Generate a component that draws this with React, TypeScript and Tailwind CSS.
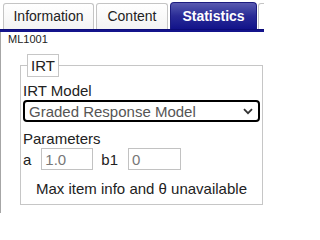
import React from "react";

export default function App() {
  return (
    <div
      className="w-[264px] h-[213px] overflow-hidden bg-white text-[#222]"
      style={{ fontFamily: '"Liberation Sans", Arial, sans-serif' }}
    >
      {/* tab strip */}
      <div className="flex items-end h-[29px] pl-[3px] gap-[2px] text-[14px] overflow-hidden">
        <div className="shrink-0 flex items-center justify-center w-[91px] h-[26px] border border-b-0 border-[#c4c4c4] rounded-t-[3px] bg-gradient-to-b from-white to-[#f3f3f3]">
          Information
        </div>
        <div className="shrink-0 flex items-center justify-center w-[72px] h-[26px] border border-b-0 border-[#c4c4c4] rounded-t-[3px] bg-gradient-to-b from-white to-[#f3f3f3]">
          Content
        </div>
        <div className="shrink-0 flex items-center justify-center w-[87px] h-[27px] border border-b-0 border-[#1c1c80] rounded-t-[4px] bg-gradient-to-b from-[#5a5ab0] via-[#2a2a96] to-[#12128a] text-white font-bold">
          Statistics
        </div>
        <div className="shrink-0 ml-[-1px] w-[40px] h-[26px] border border-b-0 border-[#c4c4c4] rounded-t-[3px] bg-white" />
      </div>
      <div className="h-[3px] w-full bg-[#14148c] border-t border-[#0c0c78]" />

      {/* panel */}
      <div className="border-l border-[#a6a6a6] h-[181px] pl-[7px] pt-[1px]">
        <div className="text-[11px] leading-[13px]">ML1001</div>

        <fieldset className="mt-[8px] ml-[12px] w-[243px] border border-[#c6c6c6] px-[2px] pt-[5px] pb-[7px] text-[15px] leading-[17px]">
          <legend className="ml-[4px] border border-[#c6c6c6] px-[3px] py-[2px]">IRT</legend>

          <div>IRT Model</div>
          <div className="mt-[1px] flex items-center justify-between h-[22px] border-2 border-black rounded-[4px] pl-[4px] pr-[4px] text-[#555]">
            <span>Graded Response Model</span>
            <svg width="10" height="7" viewBox="0 0 10 7" className="mr-[1px]">
              <path d="M1 1.2 L5 5.2 L9 1.2" fill="none" stroke="#333" strokeWidth="1.8" />
            </svg>
          </div>

          <div className="mt-[8px]">Parameters</div>
          <div className="mt-[1px] flex items-center h-[22px]">
            <span>a</span>
            <div className="ml-[10px] w-[52px] h-[22px] border border-[#c2c2c2] pl-[3px] flex items-center text-[#777]">
              1.0
            </div>
            <span className="ml-[8px]">b1</span>
            <div className="ml-[10px] w-[53px] h-[22px] border border-[#c2c2c2] pl-[3px] flex items-center text-[#777]">
              0
            </div>
          </div>

          <div className="mt-[10px] text-center">Max item info and θ unavailable</div>
        </fieldset>
      </div>
    </div>
  );
}
